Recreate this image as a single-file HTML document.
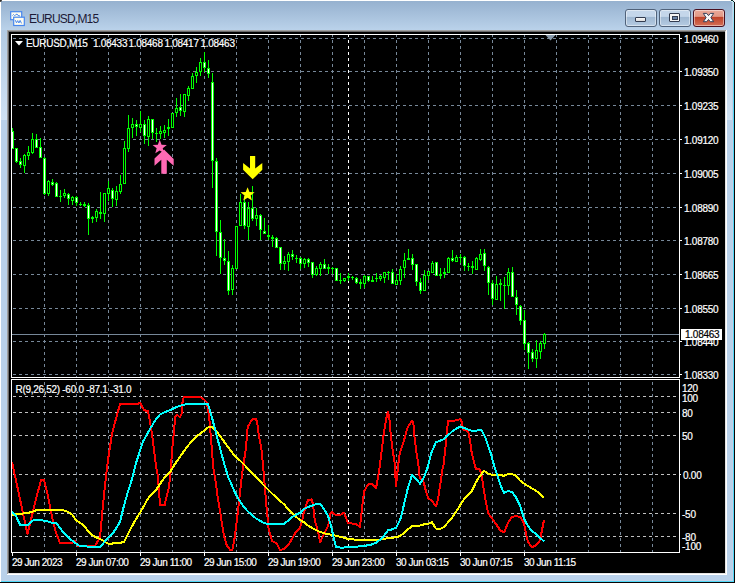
<!DOCTYPE html>
<html><head><meta charset="utf-8"><style>
html,body{margin:0;padding:0;width:737px;height:583px;overflow:hidden;background:#fff;position:relative;font-family:"Liberation Sans", sans-serif;}
.abs{position:absolute}
.ax{position:absolute;color:#fff;font-size:10px;line-height:14px;letter-spacing:-0.45px;white-space:nowrap;-webkit-text-stroke:0.2px currentColor}
#frame{position:absolute;left:1px;top:1px;width:733px;height:581px;background:#b9d1ea}
#tbar{position:absolute;left:1px;top:1px;width:732px;height:29px;background:linear-gradient(#96b1cf,#bad2ea)}
.btn{position:absolute;top:9px;height:16px;border:1px solid #50627a;border-radius:3px;box-sizing:content-box;box-shadow:inset 0 0 0 1px rgba(255,255,255,0.45)}
</style></head><body>
<div id="frame"></div>
<div id="tbar"></div>
<div class="abs" style="left:1px;top:30px;width:6px;height:90px;background:linear-gradient(#b2cae3,#d0e2f3)"></div>
<div class="abs" style="left:727px;top:30px;width:6px;height:90px;background:linear-gradient(#b2cae3,#d0e2f3)"></div>
<div class="abs" style="left:733px;top:2px;width:1px;height:579px;background:linear-gradient(#b0e8f6,#50d8f8 60px,#50d8f8)"></div>
<div class="abs" style="left:732px;top:1px;width:1px;height:580px;background:#c4d0e6"></div>
<div class="abs" style="left:734px;top:2px;width:1px;height:581px;background:#0a0505"></div>
<div class="abs" style="left:1px;top:581px;width:733px;height:1px;background:#50d8f8"></div>
<div class="abs" style="left:1px;top:580px;width:732px;height:1px;background:#c4d0e6"></div>
<div class="abs" style="left:0px;top:582px;width:735px;height:1px;background:#0a0505"></div>
<div class="abs" style="left:0;top:0;width:2px;height:2px;background:#303030;border-bottom-right-radius:2px"></div>
<div class="abs" style="left:731px;top:0;width:2px;height:1px;background:#0a2a2a"></div><div class="abs" style="left:733px;top:0;width:2px;height:2px;background:#f0f0f0"></div><div class="abs" style="left:733px;top:1px;width:1px;height:1px;background:#0a3030"></div><div class="abs" style="left:731px;top:1px;width:2px;height:1px;background:#c8f0f8"></div>
<!-- icon -->
<svg class="abs" style="left:9px;top:10px" width="17" height="17" viewBox="0 0 17 17">
<rect x="1.7" y="1.7" width="11" height="8" fill="#fffdf0" stroke="#4787ee" stroke-width="1.2"/>
<path d="M3.5 5.5l1-1 1 1 1-0.5 1.5-1 1 1.5 2 0.5" stroke="#4787ee" stroke-width="1" fill="none"/>
<rect x="4.7" y="7.2" width="10.6" height="8.3" fill="#fffdf0" stroke="#4787ee" stroke-width="1.2"/>
<path d="M6.3 10.2l1.2 2.6 1.2-2.2 1.2 2.4 1.2-2.6 1.4 3" stroke="#4787ee" stroke-width="1" fill="none"/>
</svg>
<div class="abs" style="left:29px;top:11px;font-size:12px;line-height:16px;letter-spacing:-0.8px;color:#1c1a36">EURUSD,M15</div>
<!-- buttons -->
<div class="btn" style="left:625px;width:30px;background:linear-gradient(#c4d6ea 0,#c4d6ea 40%,#9fb8d2 45%,#b5cbe2 100%)"></div>
<div class="btn" style="left:659px;width:30px;background:linear-gradient(#c4d6ea 0,#c4d6ea 40%,#9fb8d2 45%,#b5cbe2 100%)"></div>
<div class="btn" style="left:693px;width:30px;border-color:#4a1020;background:linear-gradient(#eaa898 0,#e29a88 40%,#bf4228 45%,#d47058 100%)"></div>
<div class="abs" style="left:635px;top:17px;width:9px;height:3px;background:linear-gradient(#fafafa,#dcdcdc);border:1px solid #333c50;border-radius:1px"></div>
<div class="abs" style="left:669px;top:13px;width:9px;height:7px;background:#f4f4f4;border:1px solid #333c50;border-radius:1px"></div>
<div class="abs" style="left:672px;top:16px;width:4px;height:2px;background:#6a84a8;border:1px solid #333c50"></div>
<svg class="abs" style="left:700px;top:11px" width="17" height="13" viewBox="700 11 17 13">
<polygon points="703.3,13.4 706.7,13.4 708.5,15.6 710.3,13.4 713.7,13.4 710.9,17.6 713.7,21.7 710.3,21.7 708.5,19.5 706.7,21.7 703.3,21.7 706.1,17.6" fill="#f8f8f8" stroke="#34405a" stroke-width="1" stroke-linejoin="round"/>
</svg>
<!-- client sunken edge -->
<div class="abs" style="left:7px;top:30px;width:720px;height:1px;background:#a0a0a0"></div>
<div class="abs" style="left:7px;top:30px;width:1px;height:545px;background:#a0a0a0"></div>
<div class="abs" style="left:8px;top:31px;width:718px;height:1px;background:#696969"></div>
<div class="abs" style="left:8px;top:31px;width:1px;height:543px;background:#696969"></div>
<div class="abs" style="left:8px;top:573px;width:718px;height:1px;background:#e3e3e3"></div>
<div class="abs" style="left:725px;top:31px;width:1px;height:543px;background:#e3e3e3"></div>
<div class="abs" style="left:7px;top:574px;width:720px;height:1px;background:#fff"></div>
<div class="abs" style="left:726px;top:30px;width:1px;height:545px;background:#fff"></div>
<div class="abs" style="left:9px;top:32px;width:716px;height:541px;background:#000"></div>
<svg class="abs" style="left:0;top:0" width="737" height="583" viewBox="0 0 737 583">
<g shape-rendering="crispEdges">
<path d="M13 38h3M19 38h3M25 38h3M31 38h3M37 38h3M43 38h3M49 38h3M55 38h3M61 38h3M67 38h3M73 38h3M79 38h3M85 38h3M91 38h3M97 38h3M103 38h3M109 38h3M115 38h3M121 38h3M127 38h3M133 38h3M139 38h3M145 38h3M151 38h3M157 38h3M163 38h3M169 38h3M175 38h3M181 38h3M187 38h3M193 38h3M199 38h3M205 38h3M211 38h3M217 38h3M223 38h3M229 38h3M235 38h3M241 38h3M247 38h3M253 38h3M259 38h3M265 38h3M271 38h3M277 38h3M283 38h3M289 38h3M295 38h3M301 38h3M307 38h3M313 38h3M319 38h3M325 38h3M331 38h3M337 38h3M343 38h3M349 38h3M355 38h3M361 38h3M367 38h3M373 38h3M379 38h3M385 38h3M391 38h3M397 38h3M403 38h3M409 38h3M415 38h3M421 38h3M427 38h3M433 38h3M439 38h3M445 38h3M451 38h3M457 38h3M463 38h3M469 38h3M475 38h3M481 38h3M487 38h3M493 38h3M499 38h3M505 38h3M511 38h3M517 38h3M523 38h3M529 38h3M535 38h3M541 38h3M547 38h3M553 38h3M559 38h3M565 38h3M571 38h3M577 38h3M583 38h3M589 38h3M595 38h3M601 38h3M607 38h3M613 38h3M619 38h3M625 38h3M631 38h3M637 38h3M643 38h3M649 38h3M655 38h3M661 38h3M667 38h3M673 38h3" stroke="#778899" stroke-width="1" transform="translate(0,0.5)"/>
<path d="M13 71h3M19 71h3M25 71h3M31 71h3M37 71h3M43 71h3M49 71h3M55 71h3M61 71h3M67 71h3M73 71h3M79 71h3M85 71h3M91 71h3M97 71h3M103 71h3M109 71h3M115 71h3M121 71h3M127 71h3M133 71h3M139 71h3M145 71h3M151 71h3M157 71h3M163 71h3M169 71h3M175 71h3M181 71h3M187 71h3M193 71h3M199 71h3M205 71h3M211 71h3M217 71h3M223 71h3M229 71h3M235 71h3M241 71h3M247 71h3M253 71h3M259 71h3M265 71h3M271 71h3M277 71h3M283 71h3M289 71h3M295 71h3M301 71h3M307 71h3M313 71h3M319 71h3M325 71h3M331 71h3M337 71h3M343 71h3M349 71h3M355 71h3M361 71h3M367 71h3M373 71h3M379 71h3M385 71h3M391 71h3M397 71h3M403 71h3M409 71h3M415 71h3M421 71h3M427 71h3M433 71h3M439 71h3M445 71h3M451 71h3M457 71h3M463 71h3M469 71h3M475 71h3M481 71h3M487 71h3M493 71h3M499 71h3M505 71h3M511 71h3M517 71h3M523 71h3M529 71h3M535 71h3M541 71h3M547 71h3M553 71h3M559 71h3M565 71h3M571 71h3M577 71h3M583 71h3M589 71h3M595 71h3M601 71h3M607 71h3M613 71h3M619 71h3M625 71h3M631 71h3M637 71h3M643 71h3M649 71h3M655 71h3M661 71h3M667 71h3M673 71h3" stroke="#778899" stroke-width="1" transform="translate(0,0.5)"/>
<path d="M13 105h3M19 105h3M25 105h3M31 105h3M37 105h3M43 105h3M49 105h3M55 105h3M61 105h3M67 105h3M73 105h3M79 105h3M85 105h3M91 105h3M97 105h3M103 105h3M109 105h3M115 105h3M121 105h3M127 105h3M133 105h3M139 105h3M145 105h3M151 105h3M157 105h3M163 105h3M169 105h3M175 105h3M181 105h3M187 105h3M193 105h3M199 105h3M205 105h3M211 105h3M217 105h3M223 105h3M229 105h3M235 105h3M241 105h3M247 105h3M253 105h3M259 105h3M265 105h3M271 105h3M277 105h3M283 105h3M289 105h3M295 105h3M301 105h3M307 105h3M313 105h3M319 105h3M325 105h3M331 105h3M337 105h3M343 105h3M349 105h3M355 105h3M361 105h3M367 105h3M373 105h3M379 105h3M385 105h3M391 105h3M397 105h3M403 105h3M409 105h3M415 105h3M421 105h3M427 105h3M433 105h3M439 105h3M445 105h3M451 105h3M457 105h3M463 105h3M469 105h3M475 105h3M481 105h3M487 105h3M493 105h3M499 105h3M505 105h3M511 105h3M517 105h3M523 105h3M529 105h3M535 105h3M541 105h3M547 105h3M553 105h3M559 105h3M565 105h3M571 105h3M577 105h3M583 105h3M589 105h3M595 105h3M601 105h3M607 105h3M613 105h3M619 105h3M625 105h3M631 105h3M637 105h3M643 105h3M649 105h3M655 105h3M661 105h3M667 105h3M673 105h3" stroke="#778899" stroke-width="1" transform="translate(0,0.5)"/>
<path d="M13 139h3M19 139h3M25 139h3M31 139h3M37 139h3M43 139h3M49 139h3M55 139h3M61 139h3M67 139h3M73 139h3M79 139h3M85 139h3M91 139h3M97 139h3M103 139h3M109 139h3M115 139h3M121 139h3M127 139h3M133 139h3M139 139h3M145 139h3M151 139h3M157 139h3M163 139h3M169 139h3M175 139h3M181 139h3M187 139h3M193 139h3M199 139h3M205 139h3M211 139h3M217 139h3M223 139h3M229 139h3M235 139h3M241 139h3M247 139h3M253 139h3M259 139h3M265 139h3M271 139h3M277 139h3M283 139h3M289 139h3M295 139h3M301 139h3M307 139h3M313 139h3M319 139h3M325 139h3M331 139h3M337 139h3M343 139h3M349 139h3M355 139h3M361 139h3M367 139h3M373 139h3M379 139h3M385 139h3M391 139h3M397 139h3M403 139h3M409 139h3M415 139h3M421 139h3M427 139h3M433 139h3M439 139h3M445 139h3M451 139h3M457 139h3M463 139h3M469 139h3M475 139h3M481 139h3M487 139h3M493 139h3M499 139h3M505 139h3M511 139h3M517 139h3M523 139h3M529 139h3M535 139h3M541 139h3M547 139h3M553 139h3M559 139h3M565 139h3M571 139h3M577 139h3M583 139h3M589 139h3M595 139h3M601 139h3M607 139h3M613 139h3M619 139h3M625 139h3M631 139h3M637 139h3M643 139h3M649 139h3M655 139h3M661 139h3M667 139h3M673 139h3" stroke="#778899" stroke-width="1" transform="translate(0,0.5)"/>
<path d="M13 173h3M19 173h3M25 173h3M31 173h3M37 173h3M43 173h3M49 173h3M55 173h3M61 173h3M67 173h3M73 173h3M79 173h3M85 173h3M91 173h3M97 173h3M103 173h3M109 173h3M115 173h3M121 173h3M127 173h3M133 173h3M139 173h3M145 173h3M151 173h3M157 173h3M163 173h3M169 173h3M175 173h3M181 173h3M187 173h3M193 173h3M199 173h3M205 173h3M211 173h3M217 173h3M223 173h3M229 173h3M235 173h3M241 173h3M247 173h3M253 173h3M259 173h3M265 173h3M271 173h3M277 173h3M283 173h3M289 173h3M295 173h3M301 173h3M307 173h3M313 173h3M319 173h3M325 173h3M331 173h3M337 173h3M343 173h3M349 173h3M355 173h3M361 173h3M367 173h3M373 173h3M379 173h3M385 173h3M391 173h3M397 173h3M403 173h3M409 173h3M415 173h3M421 173h3M427 173h3M433 173h3M439 173h3M445 173h3M451 173h3M457 173h3M463 173h3M469 173h3M475 173h3M481 173h3M487 173h3M493 173h3M499 173h3M505 173h3M511 173h3M517 173h3M523 173h3M529 173h3M535 173h3M541 173h3M547 173h3M553 173h3M559 173h3M565 173h3M571 173h3M577 173h3M583 173h3M589 173h3M595 173h3M601 173h3M607 173h3M613 173h3M619 173h3M625 173h3M631 173h3M637 173h3M643 173h3M649 173h3M655 173h3M661 173h3M667 173h3M673 173h3" stroke="#778899" stroke-width="1" transform="translate(0,0.5)"/>
<path d="M13 207h3M19 207h3M25 207h3M31 207h3M37 207h3M43 207h3M49 207h3M55 207h3M61 207h3M67 207h3M73 207h3M79 207h3M85 207h3M91 207h3M97 207h3M103 207h3M109 207h3M115 207h3M121 207h3M127 207h3M133 207h3M139 207h3M145 207h3M151 207h3M157 207h3M163 207h3M169 207h3M175 207h3M181 207h3M187 207h3M193 207h3M199 207h3M205 207h3M211 207h3M217 207h3M223 207h3M229 207h3M235 207h3M241 207h3M247 207h3M253 207h3M259 207h3M265 207h3M271 207h3M277 207h3M283 207h3M289 207h3M295 207h3M301 207h3M307 207h3M313 207h3M319 207h3M325 207h3M331 207h3M337 207h3M343 207h3M349 207h3M355 207h3M361 207h3M367 207h3M373 207h3M379 207h3M385 207h3M391 207h3M397 207h3M403 207h3M409 207h3M415 207h3M421 207h3M427 207h3M433 207h3M439 207h3M445 207h3M451 207h3M457 207h3M463 207h3M469 207h3M475 207h3M481 207h3M487 207h3M493 207h3M499 207h3M505 207h3M511 207h3M517 207h3M523 207h3M529 207h3M535 207h3M541 207h3M547 207h3M553 207h3M559 207h3M565 207h3M571 207h3M577 207h3M583 207h3M589 207h3M595 207h3M601 207h3M607 207h3M613 207h3M619 207h3M625 207h3M631 207h3M637 207h3M643 207h3M649 207h3M655 207h3M661 207h3M667 207h3M673 207h3" stroke="#778899" stroke-width="1" transform="translate(0,0.5)"/>
<path d="M13 240h3M19 240h3M25 240h3M31 240h3M37 240h3M43 240h3M49 240h3M55 240h3M61 240h3M67 240h3M73 240h3M79 240h3M85 240h3M91 240h3M97 240h3M103 240h3M109 240h3M115 240h3M121 240h3M127 240h3M133 240h3M139 240h3M145 240h3M151 240h3M157 240h3M163 240h3M169 240h3M175 240h3M181 240h3M187 240h3M193 240h3M199 240h3M205 240h3M211 240h3M217 240h3M223 240h3M229 240h3M235 240h3M241 240h3M247 240h3M253 240h3M259 240h3M265 240h3M271 240h3M277 240h3M283 240h3M289 240h3M295 240h3M301 240h3M307 240h3M313 240h3M319 240h3M325 240h3M331 240h3M337 240h3M343 240h3M349 240h3M355 240h3M361 240h3M367 240h3M373 240h3M379 240h3M385 240h3M391 240h3M397 240h3M403 240h3M409 240h3M415 240h3M421 240h3M427 240h3M433 240h3M439 240h3M445 240h3M451 240h3M457 240h3M463 240h3M469 240h3M475 240h3M481 240h3M487 240h3M493 240h3M499 240h3M505 240h3M511 240h3M517 240h3M523 240h3M529 240h3M535 240h3M541 240h3M547 240h3M553 240h3M559 240h3M565 240h3M571 240h3M577 240h3M583 240h3M589 240h3M595 240h3M601 240h3M607 240h3M613 240h3M619 240h3M625 240h3M631 240h3M637 240h3M643 240h3M649 240h3M655 240h3M661 240h3M667 240h3M673 240h3" stroke="#778899" stroke-width="1" transform="translate(0,0.5)"/>
<path d="M13 274h3M19 274h3M25 274h3M31 274h3M37 274h3M43 274h3M49 274h3M55 274h3M61 274h3M67 274h3M73 274h3M79 274h3M85 274h3M91 274h3M97 274h3M103 274h3M109 274h3M115 274h3M121 274h3M127 274h3M133 274h3M139 274h3M145 274h3M151 274h3M157 274h3M163 274h3M169 274h3M175 274h3M181 274h3M187 274h3M193 274h3M199 274h3M205 274h3M211 274h3M217 274h3M223 274h3M229 274h3M235 274h3M241 274h3M247 274h3M253 274h3M259 274h3M265 274h3M271 274h3M277 274h3M283 274h3M289 274h3M295 274h3M301 274h3M307 274h3M313 274h3M319 274h3M325 274h3M331 274h3M337 274h3M343 274h3M349 274h3M355 274h3M361 274h3M367 274h3M373 274h3M379 274h3M385 274h3M391 274h3M397 274h3M403 274h3M409 274h3M415 274h3M421 274h3M427 274h3M433 274h3M439 274h3M445 274h3M451 274h3M457 274h3M463 274h3M469 274h3M475 274h3M481 274h3M487 274h3M493 274h3M499 274h3M505 274h3M511 274h3M517 274h3M523 274h3M529 274h3M535 274h3M541 274h3M547 274h3M553 274h3M559 274h3M565 274h3M571 274h3M577 274h3M583 274h3M589 274h3M595 274h3M601 274h3M607 274h3M613 274h3M619 274h3M625 274h3M631 274h3M637 274h3M643 274h3M649 274h3M655 274h3M661 274h3M667 274h3M673 274h3" stroke="#778899" stroke-width="1" transform="translate(0,0.5)"/>
<path d="M13 308h3M19 308h3M25 308h3M31 308h3M37 308h3M43 308h3M49 308h3M55 308h3M61 308h3M67 308h3M73 308h3M79 308h3M85 308h3M91 308h3M97 308h3M103 308h3M109 308h3M115 308h3M121 308h3M127 308h3M133 308h3M139 308h3M145 308h3M151 308h3M157 308h3M163 308h3M169 308h3M175 308h3M181 308h3M187 308h3M193 308h3M199 308h3M205 308h3M211 308h3M217 308h3M223 308h3M229 308h3M235 308h3M241 308h3M247 308h3M253 308h3M259 308h3M265 308h3M271 308h3M277 308h3M283 308h3M289 308h3M295 308h3M301 308h3M307 308h3M313 308h3M319 308h3M325 308h3M331 308h3M337 308h3M343 308h3M349 308h3M355 308h3M361 308h3M367 308h3M373 308h3M379 308h3M385 308h3M391 308h3M397 308h3M403 308h3M409 308h3M415 308h3M421 308h3M427 308h3M433 308h3M439 308h3M445 308h3M451 308h3M457 308h3M463 308h3M469 308h3M475 308h3M481 308h3M487 308h3M493 308h3M499 308h3M505 308h3M511 308h3M517 308h3M523 308h3M529 308h3M535 308h3M541 308h3M547 308h3M553 308h3M559 308h3M565 308h3M571 308h3M577 308h3M583 308h3M589 308h3M595 308h3M601 308h3M607 308h3M613 308h3M619 308h3M625 308h3M631 308h3M637 308h3M643 308h3M649 308h3M655 308h3M661 308h3M667 308h3M673 308h3" stroke="#778899" stroke-width="1" transform="translate(0,0.5)"/>
<path d="M13 341h3M19 341h3M25 341h3M31 341h3M37 341h3M43 341h3M49 341h3M55 341h3M61 341h3M67 341h3M73 341h3M79 341h3M85 341h3M91 341h3M97 341h3M103 341h3M109 341h3M115 341h3M121 341h3M127 341h3M133 341h3M139 341h3M145 341h3M151 341h3M157 341h3M163 341h3M169 341h3M175 341h3M181 341h3M187 341h3M193 341h3M199 341h3M205 341h3M211 341h3M217 341h3M223 341h3M229 341h3M235 341h3M241 341h3M247 341h3M253 341h3M259 341h3M265 341h3M271 341h3M277 341h3M283 341h3M289 341h3M295 341h3M301 341h3M307 341h3M313 341h3M319 341h3M325 341h3M331 341h3M337 341h3M343 341h3M349 341h3M355 341h3M361 341h3M367 341h3M373 341h3M379 341h3M385 341h3M391 341h3M397 341h3M403 341h3M409 341h3M415 341h3M421 341h3M427 341h3M433 341h3M439 341h3M445 341h3M451 341h3M457 341h3M463 341h3M469 341h3M475 341h3M481 341h3M487 341h3M493 341h3M499 341h3M505 341h3M511 341h3M517 341h3M523 341h3M529 341h3M535 341h3M541 341h3M547 341h3M553 341h3M559 341h3M565 341h3M571 341h3M577 341h3M583 341h3M589 341h3M595 341h3M601 341h3M607 341h3M613 341h3M619 341h3M625 341h3M631 341h3M637 341h3M643 341h3M649 341h3M655 341h3M661 341h3M667 341h3M673 341h3" stroke="#778899" stroke-width="1" transform="translate(0,0.5)"/>
<path d="M13 374h3M19 374h3M25 374h3M31 374h3M37 374h3M43 374h3M49 374h3M55 374h3M61 374h3M67 374h3M73 374h3M79 374h3M85 374h3M91 374h3M97 374h3M103 374h3M109 374h3M115 374h3M121 374h3M127 374h3M133 374h3M139 374h3M145 374h3M151 374h3M157 374h3M163 374h3M169 374h3M175 374h3M181 374h3M187 374h3M193 374h3M199 374h3M205 374h3M211 374h3M217 374h3M223 374h3M229 374h3M235 374h3M241 374h3M247 374h3M253 374h3M259 374h3M265 374h3M271 374h3M277 374h3M283 374h3M289 374h3M295 374h3M301 374h3M307 374h3M313 374h3M319 374h3M325 374h3M331 374h3M337 374h3M343 374h3M349 374h3M355 374h3M361 374h3M367 374h3M373 374h3M379 374h3M385 374h3M391 374h3M397 374h3M403 374h3M409 374h3M415 374h3M421 374h3M427 374h3M433 374h3M439 374h3M445 374h3M451 374h3M457 374h3M463 374h3M469 374h3M475 374h3M481 374h3M487 374h3M493 374h3M499 374h3M505 374h3M511 374h3M517 374h3M523 374h3M529 374h3M535 374h3M541 374h3M547 374h3M553 374h3M559 374h3M565 374h3M571 374h3M577 374h3M583 374h3M589 374h3M595 374h3M601 374h3M607 374h3M613 374h3M619 374h3M625 374h3M631 374h3M637 374h3M643 374h3M649 374h3M655 374h3M661 374h3M667 374h3M673 374h3" stroke="#778899" stroke-width="1" transform="translate(0,0.5)"/>
<path d="M44 35v2M44 40v3M44 46v3M44 52v3M44 58v3M44 64v3M44 70v3M44 76v3M44 82v3M44 88v3M44 94v3M44 100v3M44 106v3M44 112v3M44 118v3M44 124v3M44 130v3M44 136v3M44 142v3M44 148v3M44 154v3M44 160v3M44 166v3M44 172v3M44 178v3M44 184v3M44 190v3M44 196v3M44 202v3M44 208v3M44 214v3M44 220v3M44 226v3M44 232v3M44 238v3M44 244v3M44 250v3M44 256v3M44 262v3M44 268v3M44 274v3M44 280v3M44 286v3M44 292v3M44 298v3M44 304v3M44 310v3M44 316v3M44 322v3M44 328v3M44 334v3M44 340v3M44 346v3M44 352v3M44 358v3M44 364v3M44 370v3M44 376v1" stroke="#778899" stroke-width="1" transform="translate(0.5,0)"/>
<path d="M76 35v2M76 40v3M76 46v3M76 52v3M76 58v3M76 64v3M76 70v3M76 76v3M76 82v3M76 88v3M76 94v3M76 100v3M76 106v3M76 112v3M76 118v3M76 124v3M76 130v3M76 136v3M76 142v3M76 148v3M76 154v3M76 160v3M76 166v3M76 172v3M76 178v3M76 184v3M76 190v3M76 196v3M76 202v3M76 208v3M76 214v3M76 220v3M76 226v3M76 232v3M76 238v3M76 244v3M76 250v3M76 256v3M76 262v3M76 268v3M76 274v3M76 280v3M76 286v3M76 292v3M76 298v3M76 304v3M76 310v3M76 316v3M76 322v3M76 328v3M76 334v3M76 340v3M76 346v3M76 352v3M76 358v3M76 364v3M76 370v3M76 376v1" stroke="#778899" stroke-width="1" transform="translate(0.5,0)"/>
<path d="M108 35v2M108 40v3M108 46v3M108 52v3M108 58v3M108 64v3M108 70v3M108 76v3M108 82v3M108 88v3M108 94v3M108 100v3M108 106v3M108 112v3M108 118v3M108 124v3M108 130v3M108 136v3M108 142v3M108 148v3M108 154v3M108 160v3M108 166v3M108 172v3M108 178v3M108 184v3M108 190v3M108 196v3M108 202v3M108 208v3M108 214v3M108 220v3M108 226v3M108 232v3M108 238v3M108 244v3M108 250v3M108 256v3M108 262v3M108 268v3M108 274v3M108 280v3M108 286v3M108 292v3M108 298v3M108 304v3M108 310v3M108 316v3M108 322v3M108 328v3M108 334v3M108 340v3M108 346v3M108 352v3M108 358v3M108 364v3M108 370v3M108 376v1" stroke="#778899" stroke-width="1" transform="translate(0.5,0)"/>
<path d="M140 35v2M140 40v3M140 46v3M140 52v3M140 58v3M140 64v3M140 70v3M140 76v3M140 82v3M140 88v3M140 94v3M140 100v3M140 106v3M140 112v3M140 118v3M140 124v3M140 130v3M140 136v3M140 142v3M140 148v3M140 154v3M140 160v3M140 166v3M140 172v3M140 178v3M140 184v3M140 190v3M140 196v3M140 202v3M140 208v3M140 214v3M140 220v3M140 226v3M140 232v3M140 238v3M140 244v3M140 250v3M140 256v3M140 262v3M140 268v3M140 274v3M140 280v3M140 286v3M140 292v3M140 298v3M140 304v3M140 310v3M140 316v3M140 322v3M140 328v3M140 334v3M140 340v3M140 346v3M140 352v3M140 358v3M140 364v3M140 370v3M140 376v1" stroke="#778899" stroke-width="1" transform="translate(0.5,0)"/>
<path d="M172 35v2M172 40v3M172 46v3M172 52v3M172 58v3M172 64v3M172 70v3M172 76v3M172 82v3M172 88v3M172 94v3M172 100v3M172 106v3M172 112v3M172 118v3M172 124v3M172 130v3M172 136v3M172 142v3M172 148v3M172 154v3M172 160v3M172 166v3M172 172v3M172 178v3M172 184v3M172 190v3M172 196v3M172 202v3M172 208v3M172 214v3M172 220v3M172 226v3M172 232v3M172 238v3M172 244v3M172 250v3M172 256v3M172 262v3M172 268v3M172 274v3M172 280v3M172 286v3M172 292v3M172 298v3M172 304v3M172 310v3M172 316v3M172 322v3M172 328v3M172 334v3M172 340v3M172 346v3M172 352v3M172 358v3M172 364v3M172 370v3M172 376v1" stroke="#778899" stroke-width="1" transform="translate(0.5,0)"/>
<path d="M204 35v2M204 40v3M204 46v3M204 52v3M204 58v3M204 64v3M204 70v3M204 76v3M204 82v3M204 88v3M204 94v3M204 100v3M204 106v3M204 112v3M204 118v3M204 124v3M204 130v3M204 136v3M204 142v3M204 148v3M204 154v3M204 160v3M204 166v3M204 172v3M204 178v3M204 184v3M204 190v3M204 196v3M204 202v3M204 208v3M204 214v3M204 220v3M204 226v3M204 232v3M204 238v3M204 244v3M204 250v3M204 256v3M204 262v3M204 268v3M204 274v3M204 280v3M204 286v3M204 292v3M204 298v3M204 304v3M204 310v3M204 316v3M204 322v3M204 328v3M204 334v3M204 340v3M204 346v3M204 352v3M204 358v3M204 364v3M204 370v3M204 376v1" stroke="#778899" stroke-width="1" transform="translate(0.5,0)"/>
<path d="M236 35v2M236 40v3M236 46v3M236 52v3M236 58v3M236 64v3M236 70v3M236 76v3M236 82v3M236 88v3M236 94v3M236 100v3M236 106v3M236 112v3M236 118v3M236 124v3M236 130v3M236 136v3M236 142v3M236 148v3M236 154v3M236 160v3M236 166v3M236 172v3M236 178v3M236 184v3M236 190v3M236 196v3M236 202v3M236 208v3M236 214v3M236 220v3M236 226v3M236 232v3M236 238v3M236 244v3M236 250v3M236 256v3M236 262v3M236 268v3M236 274v3M236 280v3M236 286v3M236 292v3M236 298v3M236 304v3M236 310v3M236 316v3M236 322v3M236 328v3M236 334v3M236 340v3M236 346v3M236 352v3M236 358v3M236 364v3M236 370v3M236 376v1" stroke="#778899" stroke-width="1" transform="translate(0.5,0)"/>
<path d="M268 35v2M268 40v3M268 46v3M268 52v3M268 58v3M268 64v3M268 70v3M268 76v3M268 82v3M268 88v3M268 94v3M268 100v3M268 106v3M268 112v3M268 118v3M268 124v3M268 130v3M268 136v3M268 142v3M268 148v3M268 154v3M268 160v3M268 166v3M268 172v3M268 178v3M268 184v3M268 190v3M268 196v3M268 202v3M268 208v3M268 214v3M268 220v3M268 226v3M268 232v3M268 238v3M268 244v3M268 250v3M268 256v3M268 262v3M268 268v3M268 274v3M268 280v3M268 286v3M268 292v3M268 298v3M268 304v3M268 310v3M268 316v3M268 322v3M268 328v3M268 334v3M268 340v3M268 346v3M268 352v3M268 358v3M268 364v3M268 370v3M268 376v1" stroke="#778899" stroke-width="1" transform="translate(0.5,0)"/>
<path d="M300 35v2M300 40v3M300 46v3M300 52v3M300 58v3M300 64v3M300 70v3M300 76v3M300 82v3M300 88v3M300 94v3M300 100v3M300 106v3M300 112v3M300 118v3M300 124v3M300 130v3M300 136v3M300 142v3M300 148v3M300 154v3M300 160v3M300 166v3M300 172v3M300 178v3M300 184v3M300 190v3M300 196v3M300 202v3M300 208v3M300 214v3M300 220v3M300 226v3M300 232v3M300 238v3M300 244v3M300 250v3M300 256v3M300 262v3M300 268v3M300 274v3M300 280v3M300 286v3M300 292v3M300 298v3M300 304v3M300 310v3M300 316v3M300 322v3M300 328v3M300 334v3M300 340v3M300 346v3M300 352v3M300 358v3M300 364v3M300 370v3M300 376v1" stroke="#778899" stroke-width="1" transform="translate(0.5,0)"/>
<path d="M332 35v2M332 40v3M332 46v3M332 52v3M332 58v3M332 64v3M332 70v3M332 76v3M332 82v3M332 88v3M332 94v3M332 100v3M332 106v3M332 112v3M332 118v3M332 124v3M332 130v3M332 136v3M332 142v3M332 148v3M332 154v3M332 160v3M332 166v3M332 172v3M332 178v3M332 184v3M332 190v3M332 196v3M332 202v3M332 208v3M332 214v3M332 220v3M332 226v3M332 232v3M332 238v3M332 244v3M332 250v3M332 256v3M332 262v3M332 268v3M332 274v3M332 280v3M332 286v3M332 292v3M332 298v3M332 304v3M332 310v3M332 316v3M332 322v3M332 328v3M332 334v3M332 340v3M332 346v3M332 352v3M332 358v3M332 364v3M332 370v3M332 376v1" stroke="#778899" stroke-width="1" transform="translate(0.5,0)"/>
<path d="M364 35v2M364 40v3M364 46v3M364 52v3M364 58v3M364 64v3M364 70v3M364 76v3M364 82v3M364 88v3M364 94v3M364 100v3M364 106v3M364 112v3M364 118v3M364 124v3M364 130v3M364 136v3M364 142v3M364 148v3M364 154v3M364 160v3M364 166v3M364 172v3M364 178v3M364 184v3M364 190v3M364 196v3M364 202v3M364 208v3M364 214v3M364 220v3M364 226v3M364 232v3M364 238v3M364 244v3M364 250v3M364 256v3M364 262v3M364 268v3M364 274v3M364 280v3M364 286v3M364 292v3M364 298v3M364 304v3M364 310v3M364 316v3M364 322v3M364 328v3M364 334v3M364 340v3M364 346v3M364 352v3M364 358v3M364 364v3M364 370v3M364 376v1" stroke="#778899" stroke-width="1" transform="translate(0.5,0)"/>
<path d="M396 35v2M396 40v3M396 46v3M396 52v3M396 58v3M396 64v3M396 70v3M396 76v3M396 82v3M396 88v3M396 94v3M396 100v3M396 106v3M396 112v3M396 118v3M396 124v3M396 130v3M396 136v3M396 142v3M396 148v3M396 154v3M396 160v3M396 166v3M396 172v3M396 178v3M396 184v3M396 190v3M396 196v3M396 202v3M396 208v3M396 214v3M396 220v3M396 226v3M396 232v3M396 238v3M396 244v3M396 250v3M396 256v3M396 262v3M396 268v3M396 274v3M396 280v3M396 286v3M396 292v3M396 298v3M396 304v3M396 310v3M396 316v3M396 322v3M396 328v3M396 334v3M396 340v3M396 346v3M396 352v3M396 358v3M396 364v3M396 370v3M396 376v1" stroke="#778899" stroke-width="1" transform="translate(0.5,0)"/>
<path d="M428 35v2M428 40v3M428 46v3M428 52v3M428 58v3M428 64v3M428 70v3M428 76v3M428 82v3M428 88v3M428 94v3M428 100v3M428 106v3M428 112v3M428 118v3M428 124v3M428 130v3M428 136v3M428 142v3M428 148v3M428 154v3M428 160v3M428 166v3M428 172v3M428 178v3M428 184v3M428 190v3M428 196v3M428 202v3M428 208v3M428 214v3M428 220v3M428 226v3M428 232v3M428 238v3M428 244v3M428 250v3M428 256v3M428 262v3M428 268v3M428 274v3M428 280v3M428 286v3M428 292v3M428 298v3M428 304v3M428 310v3M428 316v3M428 322v3M428 328v3M428 334v3M428 340v3M428 346v3M428 352v3M428 358v3M428 364v3M428 370v3M428 376v1" stroke="#778899" stroke-width="1" transform="translate(0.5,0)"/>
<path d="M460 35v2M460 40v3M460 46v3M460 52v3M460 58v3M460 64v3M460 70v3M460 76v3M460 82v3M460 88v3M460 94v3M460 100v3M460 106v3M460 112v3M460 118v3M460 124v3M460 130v3M460 136v3M460 142v3M460 148v3M460 154v3M460 160v3M460 166v3M460 172v3M460 178v3M460 184v3M460 190v3M460 196v3M460 202v3M460 208v3M460 214v3M460 220v3M460 226v3M460 232v3M460 238v3M460 244v3M460 250v3M460 256v3M460 262v3M460 268v3M460 274v3M460 280v3M460 286v3M460 292v3M460 298v3M460 304v3M460 310v3M460 316v3M460 322v3M460 328v3M460 334v3M460 340v3M460 346v3M460 352v3M460 358v3M460 364v3M460 370v3M460 376v1" stroke="#778899" stroke-width="1" transform="translate(0.5,0)"/>
<path d="M492 35v2M492 40v3M492 46v3M492 52v3M492 58v3M492 64v3M492 70v3M492 76v3M492 82v3M492 88v3M492 94v3M492 100v3M492 106v3M492 112v3M492 118v3M492 124v3M492 130v3M492 136v3M492 142v3M492 148v3M492 154v3M492 160v3M492 166v3M492 172v3M492 178v3M492 184v3M492 190v3M492 196v3M492 202v3M492 208v3M492 214v3M492 220v3M492 226v3M492 232v3M492 238v3M492 244v3M492 250v3M492 256v3M492 262v3M492 268v3M492 274v3M492 280v3M492 286v3M492 292v3M492 298v3M492 304v3M492 310v3M492 316v3M492 322v3M492 328v3M492 334v3M492 340v3M492 346v3M492 352v3M492 358v3M492 364v3M492 370v3M492 376v1" stroke="#778899" stroke-width="1" transform="translate(0.5,0)"/>
<path d="M524 35v2M524 40v3M524 46v3M524 52v3M524 58v3M524 64v3M524 70v3M524 76v3M524 82v3M524 88v3M524 94v3M524 100v3M524 106v3M524 112v3M524 118v3M524 124v3M524 130v3M524 136v3M524 142v3M524 148v3M524 154v3M524 160v3M524 166v3M524 172v3M524 178v3M524 184v3M524 190v3M524 196v3M524 202v3M524 208v3M524 214v3M524 220v3M524 226v3M524 232v3M524 238v3M524 244v3M524 250v3M524 256v3M524 262v3M524 268v3M524 274v3M524 280v3M524 286v3M524 292v3M524 298v3M524 304v3M524 310v3M524 316v3M524 322v3M524 328v3M524 334v3M524 340v3M524 346v3M524 352v3M524 358v3M524 364v3M524 370v3M524 376v1" stroke="#778899" stroke-width="1" transform="translate(0.5,0)"/>
<path d="M556 35v2M556 40v3M556 46v3M556 52v3M556 58v3M556 64v3M556 70v3M556 76v3M556 82v3M556 88v3M556 94v3M556 100v3M556 106v3M556 112v3M556 118v3M556 124v3M556 130v3M556 136v3M556 142v3M556 148v3M556 154v3M556 160v3M556 166v3M556 172v3M556 178v3M556 184v3M556 190v3M556 196v3M556 202v3M556 208v3M556 214v3M556 220v3M556 226v3M556 232v3M556 238v3M556 244v3M556 250v3M556 256v3M556 262v3M556 268v3M556 274v3M556 280v3M556 286v3M556 292v3M556 298v3M556 304v3M556 310v3M556 316v3M556 322v3M556 328v3M556 334v3M556 340v3M556 346v3M556 352v3M556 358v3M556 364v3M556 370v3M556 376v1" stroke="#778899" stroke-width="1" transform="translate(0.5,0)"/>
<path d="M588 35v2M588 40v3M588 46v3M588 52v3M588 58v3M588 64v3M588 70v3M588 76v3M588 82v3M588 88v3M588 94v3M588 100v3M588 106v3M588 112v3M588 118v3M588 124v3M588 130v3M588 136v3M588 142v3M588 148v3M588 154v3M588 160v3M588 166v3M588 172v3M588 178v3M588 184v3M588 190v3M588 196v3M588 202v3M588 208v3M588 214v3M588 220v3M588 226v3M588 232v3M588 238v3M588 244v3M588 250v3M588 256v3M588 262v3M588 268v3M588 274v3M588 280v3M588 286v3M588 292v3M588 298v3M588 304v3M588 310v3M588 316v3M588 322v3M588 328v3M588 334v3M588 340v3M588 346v3M588 352v3M588 358v3M588 364v3M588 370v3M588 376v1" stroke="#778899" stroke-width="1" transform="translate(0.5,0)"/>
<path d="M620 35v2M620 40v3M620 46v3M620 52v3M620 58v3M620 64v3M620 70v3M620 76v3M620 82v3M620 88v3M620 94v3M620 100v3M620 106v3M620 112v3M620 118v3M620 124v3M620 130v3M620 136v3M620 142v3M620 148v3M620 154v3M620 160v3M620 166v3M620 172v3M620 178v3M620 184v3M620 190v3M620 196v3M620 202v3M620 208v3M620 214v3M620 220v3M620 226v3M620 232v3M620 238v3M620 244v3M620 250v3M620 256v3M620 262v3M620 268v3M620 274v3M620 280v3M620 286v3M620 292v3M620 298v3M620 304v3M620 310v3M620 316v3M620 322v3M620 328v3M620 334v3M620 340v3M620 346v3M620 352v3M620 358v3M620 364v3M620 370v3M620 376v1" stroke="#778899" stroke-width="1" transform="translate(0.5,0)"/>
<path d="M652 35v2M652 40v3M652 46v3M652 52v3M652 58v3M652 64v3M652 70v3M652 76v3M652 82v3M652 88v3M652 94v3M652 100v3M652 106v3M652 112v3M652 118v3M652 124v3M652 130v3M652 136v3M652 142v3M652 148v3M652 154v3M652 160v3M652 166v3M652 172v3M652 178v3M652 184v3M652 190v3M652 196v3M652 202v3M652 208v3M652 214v3M652 220v3M652 226v3M652 232v3M652 238v3M652 244v3M652 250v3M652 256v3M652 262v3M652 268v3M652 274v3M652 280v3M652 286v3M652 292v3M652 298v3M652 304v3M652 310v3M652 316v3M652 322v3M652 328v3M652 334v3M652 340v3M652 346v3M652 352v3M652 358v3M652 364v3M652 370v3M652 376v1" stroke="#778899" stroke-width="1" transform="translate(0.5,0)"/>
<path d="M348 35v2M348 40v3M348 46v3M348 52v3M348 58v3M348 64v3M348 70v3M348 76v3M348 82v3M348 88v3M348 94v3M348 100v3M348 106v3M348 112v3M348 118v3M348 124v3M348 130v3M348 136v3M348 142v3M348 148v3M348 154v3M348 160v3M348 166v3M348 172v3M348 178v3M348 184v3M348 190v3M348 196v3M348 202v3M348 208v3M348 214v3M348 220v3M348 226v3M348 232v3M348 238v3M348 244v3M348 250v3M348 256v3M348 262v3M348 268v3M348 274v3M348 280v3M348 286v3M348 292v3M348 298v3M348 304v3M348 310v3M348 316v3M348 322v3M348 328v3M348 334v3M348 340v3M348 346v3M348 352v3M348 358v3M348 364v3M348 370v3M348 376v1" stroke="#ffffff" stroke-width="1" transform="translate(0.5,0)"/>
<path d="M44 382v3M44 388v3M44 394v3M44 400v3M44 406v3M44 412v3M44 418v3M44 424v3M44 430v3M44 436v3M44 442v3M44 448v3M44 454v3M44 460v3M44 466v3M44 472v3M44 478v3M44 484v3M44 490v3M44 496v3M44 502v3M44 508v3M44 514v3M44 520v3M44 526v3M44 532v3M44 538v3M44 544v3M44 550v2" stroke="#778899" stroke-width="1" transform="translate(0.5,0)"/>
<path d="M76 382v3M76 388v3M76 394v3M76 400v3M76 406v3M76 412v3M76 418v3M76 424v3M76 430v3M76 436v3M76 442v3M76 448v3M76 454v3M76 460v3M76 466v3M76 472v3M76 478v3M76 484v3M76 490v3M76 496v3M76 502v3M76 508v3M76 514v3M76 520v3M76 526v3M76 532v3M76 538v3M76 544v3M76 550v2" stroke="#778899" stroke-width="1" transform="translate(0.5,0)"/>
<path d="M108 382v3M108 388v3M108 394v3M108 400v3M108 406v3M108 412v3M108 418v3M108 424v3M108 430v3M108 436v3M108 442v3M108 448v3M108 454v3M108 460v3M108 466v3M108 472v3M108 478v3M108 484v3M108 490v3M108 496v3M108 502v3M108 508v3M108 514v3M108 520v3M108 526v3M108 532v3M108 538v3M108 544v3M108 550v2" stroke="#778899" stroke-width="1" transform="translate(0.5,0)"/>
<path d="M140 382v3M140 388v3M140 394v3M140 400v3M140 406v3M140 412v3M140 418v3M140 424v3M140 430v3M140 436v3M140 442v3M140 448v3M140 454v3M140 460v3M140 466v3M140 472v3M140 478v3M140 484v3M140 490v3M140 496v3M140 502v3M140 508v3M140 514v3M140 520v3M140 526v3M140 532v3M140 538v3M140 544v3M140 550v2" stroke="#778899" stroke-width="1" transform="translate(0.5,0)"/>
<path d="M172 382v3M172 388v3M172 394v3M172 400v3M172 406v3M172 412v3M172 418v3M172 424v3M172 430v3M172 436v3M172 442v3M172 448v3M172 454v3M172 460v3M172 466v3M172 472v3M172 478v3M172 484v3M172 490v3M172 496v3M172 502v3M172 508v3M172 514v3M172 520v3M172 526v3M172 532v3M172 538v3M172 544v3M172 550v2" stroke="#778899" stroke-width="1" transform="translate(0.5,0)"/>
<path d="M204 382v3M204 388v3M204 394v3M204 400v3M204 406v3M204 412v3M204 418v3M204 424v3M204 430v3M204 436v3M204 442v3M204 448v3M204 454v3M204 460v3M204 466v3M204 472v3M204 478v3M204 484v3M204 490v3M204 496v3M204 502v3M204 508v3M204 514v3M204 520v3M204 526v3M204 532v3M204 538v3M204 544v3M204 550v2" stroke="#778899" stroke-width="1" transform="translate(0.5,0)"/>
<path d="M236 382v3M236 388v3M236 394v3M236 400v3M236 406v3M236 412v3M236 418v3M236 424v3M236 430v3M236 436v3M236 442v3M236 448v3M236 454v3M236 460v3M236 466v3M236 472v3M236 478v3M236 484v3M236 490v3M236 496v3M236 502v3M236 508v3M236 514v3M236 520v3M236 526v3M236 532v3M236 538v3M236 544v3M236 550v2" stroke="#778899" stroke-width="1" transform="translate(0.5,0)"/>
<path d="M268 382v3M268 388v3M268 394v3M268 400v3M268 406v3M268 412v3M268 418v3M268 424v3M268 430v3M268 436v3M268 442v3M268 448v3M268 454v3M268 460v3M268 466v3M268 472v3M268 478v3M268 484v3M268 490v3M268 496v3M268 502v3M268 508v3M268 514v3M268 520v3M268 526v3M268 532v3M268 538v3M268 544v3M268 550v2" stroke="#778899" stroke-width="1" transform="translate(0.5,0)"/>
<path d="M300 382v3M300 388v3M300 394v3M300 400v3M300 406v3M300 412v3M300 418v3M300 424v3M300 430v3M300 436v3M300 442v3M300 448v3M300 454v3M300 460v3M300 466v3M300 472v3M300 478v3M300 484v3M300 490v3M300 496v3M300 502v3M300 508v3M300 514v3M300 520v3M300 526v3M300 532v3M300 538v3M300 544v3M300 550v2" stroke="#778899" stroke-width="1" transform="translate(0.5,0)"/>
<path d="M332 382v3M332 388v3M332 394v3M332 400v3M332 406v3M332 412v3M332 418v3M332 424v3M332 430v3M332 436v3M332 442v3M332 448v3M332 454v3M332 460v3M332 466v3M332 472v3M332 478v3M332 484v3M332 490v3M332 496v3M332 502v3M332 508v3M332 514v3M332 520v3M332 526v3M332 532v3M332 538v3M332 544v3M332 550v2" stroke="#778899" stroke-width="1" transform="translate(0.5,0)"/>
<path d="M364 382v3M364 388v3M364 394v3M364 400v3M364 406v3M364 412v3M364 418v3M364 424v3M364 430v3M364 436v3M364 442v3M364 448v3M364 454v3M364 460v3M364 466v3M364 472v3M364 478v3M364 484v3M364 490v3M364 496v3M364 502v3M364 508v3M364 514v3M364 520v3M364 526v3M364 532v3M364 538v3M364 544v3M364 550v2" stroke="#778899" stroke-width="1" transform="translate(0.5,0)"/>
<path d="M396 382v3M396 388v3M396 394v3M396 400v3M396 406v3M396 412v3M396 418v3M396 424v3M396 430v3M396 436v3M396 442v3M396 448v3M396 454v3M396 460v3M396 466v3M396 472v3M396 478v3M396 484v3M396 490v3M396 496v3M396 502v3M396 508v3M396 514v3M396 520v3M396 526v3M396 532v3M396 538v3M396 544v3M396 550v2" stroke="#778899" stroke-width="1" transform="translate(0.5,0)"/>
<path d="M428 382v3M428 388v3M428 394v3M428 400v3M428 406v3M428 412v3M428 418v3M428 424v3M428 430v3M428 436v3M428 442v3M428 448v3M428 454v3M428 460v3M428 466v3M428 472v3M428 478v3M428 484v3M428 490v3M428 496v3M428 502v3M428 508v3M428 514v3M428 520v3M428 526v3M428 532v3M428 538v3M428 544v3M428 550v2" stroke="#778899" stroke-width="1" transform="translate(0.5,0)"/>
<path d="M460 382v3M460 388v3M460 394v3M460 400v3M460 406v3M460 412v3M460 418v3M460 424v3M460 430v3M460 436v3M460 442v3M460 448v3M460 454v3M460 460v3M460 466v3M460 472v3M460 478v3M460 484v3M460 490v3M460 496v3M460 502v3M460 508v3M460 514v3M460 520v3M460 526v3M460 532v3M460 538v3M460 544v3M460 550v2" stroke="#778899" stroke-width="1" transform="translate(0.5,0)"/>
<path d="M492 382v3M492 388v3M492 394v3M492 400v3M492 406v3M492 412v3M492 418v3M492 424v3M492 430v3M492 436v3M492 442v3M492 448v3M492 454v3M492 460v3M492 466v3M492 472v3M492 478v3M492 484v3M492 490v3M492 496v3M492 502v3M492 508v3M492 514v3M492 520v3M492 526v3M492 532v3M492 538v3M492 544v3M492 550v2" stroke="#778899" stroke-width="1" transform="translate(0.5,0)"/>
<path d="M524 382v3M524 388v3M524 394v3M524 400v3M524 406v3M524 412v3M524 418v3M524 424v3M524 430v3M524 436v3M524 442v3M524 448v3M524 454v3M524 460v3M524 466v3M524 472v3M524 478v3M524 484v3M524 490v3M524 496v3M524 502v3M524 508v3M524 514v3M524 520v3M524 526v3M524 532v3M524 538v3M524 544v3M524 550v2" stroke="#778899" stroke-width="1" transform="translate(0.5,0)"/>
<path d="M556 382v3M556 388v3M556 394v3M556 400v3M556 406v3M556 412v3M556 418v3M556 424v3M556 430v3M556 436v3M556 442v3M556 448v3M556 454v3M556 460v3M556 466v3M556 472v3M556 478v3M556 484v3M556 490v3M556 496v3M556 502v3M556 508v3M556 514v3M556 520v3M556 526v3M556 532v3M556 538v3M556 544v3M556 550v2" stroke="#778899" stroke-width="1" transform="translate(0.5,0)"/>
<path d="M588 382v3M588 388v3M588 394v3M588 400v3M588 406v3M588 412v3M588 418v3M588 424v3M588 430v3M588 436v3M588 442v3M588 448v3M588 454v3M588 460v3M588 466v3M588 472v3M588 478v3M588 484v3M588 490v3M588 496v3M588 502v3M588 508v3M588 514v3M588 520v3M588 526v3M588 532v3M588 538v3M588 544v3M588 550v2" stroke="#778899" stroke-width="1" transform="translate(0.5,0)"/>
<path d="M620 382v3M620 388v3M620 394v3M620 400v3M620 406v3M620 412v3M620 418v3M620 424v3M620 430v3M620 436v3M620 442v3M620 448v3M620 454v3M620 460v3M620 466v3M620 472v3M620 478v3M620 484v3M620 490v3M620 496v3M620 502v3M620 508v3M620 514v3M620 520v3M620 526v3M620 532v3M620 538v3M620 544v3M620 550v2" stroke="#778899" stroke-width="1" transform="translate(0.5,0)"/>
<path d="M652 382v3M652 388v3M652 394v3M652 400v3M652 406v3M652 412v3M652 418v3M652 424v3M652 430v3M652 436v3M652 442v3M652 448v3M652 454v3M652 460v3M652 466v3M652 472v3M652 478v3M652 484v3M652 490v3M652 496v3M652 502v3M652 508v3M652 514v3M652 520v3M652 526v3M652 532v3M652 538v3M652 544v3M652 550v2" stroke="#778899" stroke-width="1" transform="translate(0.5,0)"/>
<path d="M348 382v3M348 388v3M348 394v3M348 400v3M348 406v3M348 412v3M348 418v3M348 424v3M348 430v3M348 436v3M348 442v3M348 448v3M348 454v3M348 460v3M348 466v3M348 472v3M348 478v3M348 484v3M348 490v3M348 496v3M348 502v3M348 508v3M348 514v3M348 520v3M348 526v3M348 532v3M348 538v3M348 544v3M348 550v2" stroke="#ffffff" stroke-width="1" transform="translate(0.5,0)"/>
<path d="M13 396h3M19 396h3M25 396h3M31 396h3M37 396h3M43 396h3M49 396h3M55 396h3M61 396h3M67 396h3M73 396h3M79 396h3M85 396h3M91 396h3M97 396h3M103 396h3M109 396h3M115 396h3M121 396h3M127 396h3M133 396h3M139 396h3M145 396h3M151 396h3M157 396h3M163 396h3M169 396h3M175 396h3M181 396h3M187 396h3M193 396h3M199 396h3M205 396h3M211 396h3M217 396h3M223 396h3M229 396h3M235 396h3M241 396h3M247 396h3M253 396h3M259 396h3M265 396h3M271 396h3M277 396h3M283 396h3M289 396h3M295 396h3M301 396h3M307 396h3M313 396h3M319 396h3M325 396h3M331 396h3M337 396h3M343 396h3M349 396h3M355 396h3M361 396h3M367 396h3M373 396h3M379 396h3M385 396h3M391 396h3M397 396h3M403 396h3M409 396h3M415 396h3M421 396h3M427 396h3M433 396h3M439 396h3M445 396h3M451 396h3M457 396h3M463 396h3M469 396h3M475 396h3M481 396h3M487 396h3M493 396h3M499 396h3M505 396h3M511 396h3M517 396h3M523 396h3M529 396h3M535 396h3M541 396h3M547 396h3M553 396h3M559 396h3M565 396h3M571 396h3M577 396h3M583 396h3M589 396h3M595 396h3M601 396h3M607 396h3M613 396h3M619 396h3M625 396h3M631 396h3M637 396h3M643 396h3M649 396h3M655 396h3M661 396h3M667 396h3M673 396h3" stroke="#c0c0c0" stroke-width="1" transform="translate(0,0.5)"/>
<path d="M13 412h3M19 412h3M25 412h3M31 412h3M37 412h3M43 412h3M49 412h3M55 412h3M61 412h3M67 412h3M73 412h3M79 412h3M85 412h3M91 412h3M97 412h3M103 412h3M109 412h3M115 412h3M121 412h3M127 412h3M133 412h3M139 412h3M145 412h3M151 412h3M157 412h3M163 412h3M169 412h3M175 412h3M181 412h3M187 412h3M193 412h3M199 412h3M205 412h3M211 412h3M217 412h3M223 412h3M229 412h3M235 412h3M241 412h3M247 412h3M253 412h3M259 412h3M265 412h3M271 412h3M277 412h3M283 412h3M289 412h3M295 412h3M301 412h3M307 412h3M313 412h3M319 412h3M325 412h3M331 412h3M337 412h3M343 412h3M349 412h3M355 412h3M361 412h3M367 412h3M373 412h3M379 412h3M385 412h3M391 412h3M397 412h3M403 412h3M409 412h3M415 412h3M421 412h3M427 412h3M433 412h3M439 412h3M445 412h3M451 412h3M457 412h3M463 412h3M469 412h3M475 412h3M481 412h3M487 412h3M493 412h3M499 412h3M505 412h3M511 412h3M517 412h3M523 412h3M529 412h3M535 412h3M541 412h3M547 412h3M553 412h3M559 412h3M565 412h3M571 412h3M577 412h3M583 412h3M589 412h3M595 412h3M601 412h3M607 412h3M613 412h3M619 412h3M625 412h3M631 412h3M637 412h3M643 412h3M649 412h3M655 412h3M661 412h3M667 412h3M673 412h3" stroke="#c0c0c0" stroke-width="1" transform="translate(0,0.5)"/>
<path d="M13 435h3M19 435h3M25 435h3M31 435h3M37 435h3M43 435h3M49 435h3M55 435h3M61 435h3M67 435h3M73 435h3M79 435h3M85 435h3M91 435h3M97 435h3M103 435h3M109 435h3M115 435h3M121 435h3M127 435h3M133 435h3M139 435h3M145 435h3M151 435h3M157 435h3M163 435h3M169 435h3M175 435h3M181 435h3M187 435h3M193 435h3M199 435h3M205 435h3M211 435h3M217 435h3M223 435h3M229 435h3M235 435h3M241 435h3M247 435h3M253 435h3M259 435h3M265 435h3M271 435h3M277 435h3M283 435h3M289 435h3M295 435h3M301 435h3M307 435h3M313 435h3M319 435h3M325 435h3M331 435h3M337 435h3M343 435h3M349 435h3M355 435h3M361 435h3M367 435h3M373 435h3M379 435h3M385 435h3M391 435h3M397 435h3M403 435h3M409 435h3M415 435h3M421 435h3M427 435h3M433 435h3M439 435h3M445 435h3M451 435h3M457 435h3M463 435h3M469 435h3M475 435h3M481 435h3M487 435h3M493 435h3M499 435h3M505 435h3M511 435h3M517 435h3M523 435h3M529 435h3M535 435h3M541 435h3M547 435h3M553 435h3M559 435h3M565 435h3M571 435h3M577 435h3M583 435h3M589 435h3M595 435h3M601 435h3M607 435h3M613 435h3M619 435h3M625 435h3M631 435h3M637 435h3M643 435h3M649 435h3M655 435h3M661 435h3M667 435h3M673 435h3" stroke="#c0c0c0" stroke-width="1" transform="translate(0,0.5)"/>
<path d="M13 474h3M19 474h3M25 474h3M31 474h3M37 474h3M43 474h3M49 474h3M55 474h3M61 474h3M67 474h3M73 474h3M79 474h3M85 474h3M91 474h3M97 474h3M103 474h3M109 474h3M115 474h3M121 474h3M127 474h3M133 474h3M139 474h3M145 474h3M151 474h3M157 474h3M163 474h3M169 474h3M175 474h3M181 474h3M187 474h3M193 474h3M199 474h3M205 474h3M211 474h3M217 474h3M223 474h3M229 474h3M235 474h3M241 474h3M247 474h3M253 474h3M259 474h3M265 474h3M271 474h3M277 474h3M283 474h3M289 474h3M295 474h3M301 474h3M307 474h3M313 474h3M319 474h3M325 474h3M331 474h3M337 474h3M343 474h3M349 474h3M355 474h3M361 474h3M367 474h3M373 474h3M379 474h3M385 474h3M391 474h3M397 474h3M403 474h3M409 474h3M415 474h3M421 474h3M427 474h3M433 474h3M439 474h3M445 474h3M451 474h3M457 474h3M463 474h3M469 474h3M475 474h3M481 474h3M487 474h3M493 474h3M499 474h3M505 474h3M511 474h3M517 474h3M523 474h3M529 474h3M535 474h3M541 474h3M547 474h3M553 474h3M559 474h3M565 474h3M571 474h3M577 474h3M583 474h3M589 474h3M595 474h3M601 474h3M607 474h3M613 474h3M619 474h3M625 474h3M631 474h3M637 474h3M643 474h3M649 474h3M655 474h3M661 474h3M667 474h3M673 474h3" stroke="#c0c0c0" stroke-width="1" transform="translate(0,0.5)"/>
<path d="M13 513h3M19 513h3M25 513h3M31 513h3M37 513h3M43 513h3M49 513h3M55 513h3M61 513h3M67 513h3M73 513h3M79 513h3M85 513h3M91 513h3M97 513h3M103 513h3M109 513h3M115 513h3M121 513h3M127 513h3M133 513h3M139 513h3M145 513h3M151 513h3M157 513h3M163 513h3M169 513h3M175 513h3M181 513h3M187 513h3M193 513h3M199 513h3M205 513h3M211 513h3M217 513h3M223 513h3M229 513h3M235 513h3M241 513h3M247 513h3M253 513h3M259 513h3M265 513h3M271 513h3M277 513h3M283 513h3M289 513h3M295 513h3M301 513h3M307 513h3M313 513h3M319 513h3M325 513h3M331 513h3M337 513h3M343 513h3M349 513h3M355 513h3M361 513h3M367 513h3M373 513h3M379 513h3M385 513h3M391 513h3M397 513h3M403 513h3M409 513h3M415 513h3M421 513h3M427 513h3M433 513h3M439 513h3M445 513h3M451 513h3M457 513h3M463 513h3M469 513h3M475 513h3M481 513h3M487 513h3M493 513h3M499 513h3M505 513h3M511 513h3M517 513h3M523 513h3M529 513h3M535 513h3M541 513h3M547 513h3M553 513h3M559 513h3M565 513h3M571 513h3M577 513h3M583 513h3M589 513h3M595 513h3M601 513h3M607 513h3M613 513h3M619 513h3M625 513h3M631 513h3M637 513h3M643 513h3M649 513h3M655 513h3M661 513h3M667 513h3M673 513h3" stroke="#c0c0c0" stroke-width="1" transform="translate(0,0.5)"/>
<path d="M13 536h3M19 536h3M25 536h3M31 536h3M37 536h3M43 536h3M49 536h3M55 536h3M61 536h3M67 536h3M73 536h3M79 536h3M85 536h3M91 536h3M97 536h3M103 536h3M109 536h3M115 536h3M121 536h3M127 536h3M133 536h3M139 536h3M145 536h3M151 536h3M157 536h3M163 536h3M169 536h3M175 536h3M181 536h3M187 536h3M193 536h3M199 536h3M205 536h3M211 536h3M217 536h3M223 536h3M229 536h3M235 536h3M241 536h3M247 536h3M253 536h3M259 536h3M265 536h3M271 536h3M277 536h3M283 536h3M289 536h3M295 536h3M301 536h3M307 536h3M313 536h3M319 536h3M325 536h3M331 536h3M337 536h3M343 536h3M349 536h3M355 536h3M361 536h3M367 536h3M373 536h3M379 536h3M385 536h3M391 536h3M397 536h3M403 536h3M409 536h3M415 536h3M421 536h3M427 536h3M433 536h3M439 536h3M445 536h3M451 536h3M457 536h3M463 536h3M469 536h3M475 536h3M481 536h3M487 536h3M493 536h3M499 536h3M505 536h3M511 536h3M517 536h3M523 536h3M529 536h3M535 536h3M541 536h3M547 536h3M553 536h3M559 536h3M565 536h3M571 536h3M577 536h3M583 536h3M589 536h3M595 536h3M601 536h3M607 536h3M613 536h3M619 536h3M625 536h3M631 536h3M637 536h3M643 536h3M649 536h3M655 536h3M661 536h3M667 536h3M673 536h3" stroke="#c0c0c0" stroke-width="1" transform="translate(0,0.5)"/>
</g>
<g shape-rendering="crispEdges" fill="#fff">
<rect x="11" y="34" width="669" height="1"/>
<rect x="11" y="377" width="669" height="1"/>
<rect x="11" y="34" width="1" height="344"/>
<rect x="679" y="34" width="1" height="344"/>
<rect x="11" y="379" width="669" height="1"/>
<rect x="11" y="552" width="669" height="1"/>
<rect x="11" y="379" width="1" height="174"/>
<rect x="679" y="379" width="1" height="174"/>
<rect x="680" y="38" width="2" height="1"/>
<rect x="680" y="71" width="2" height="1"/>
<rect x="680" y="105" width="2" height="1"/>
<rect x="680" y="139" width="2" height="1"/>
<rect x="680" y="173" width="2" height="1"/>
<rect x="680" y="207" width="2" height="1"/>
<rect x="680" y="240" width="2" height="1"/>
<rect x="680" y="274" width="2" height="1"/>
<rect x="680" y="308" width="2" height="1"/>
<rect x="680" y="341" width="2" height="1"/>
<rect x="680" y="374" width="2" height="1"/>
<rect x="680" y="474" width="1" height="1"/>
<rect x="12" y="553" width="1" height="3"/>
<rect x="76" y="553" width="1" height="3"/>
<rect x="140" y="553" width="1" height="3"/>
<rect x="204" y="553" width="1" height="3"/>
<rect x="268" y="553" width="1" height="3"/>
<rect x="332" y="553" width="1" height="3"/>
<rect x="396" y="553" width="1" height="3"/>
<rect x="460" y="553" width="1" height="3"/>
<rect x="524" y="553" width="1" height="3"/>
</g>
<rect x="12" y="334" width="667" height="1" fill="#778899" shape-rendering="crispEdges"/>
<g fill="#00ff00" shape-rendering="crispEdges"><rect x="12" y="128" width="1" height="21"/><rect x="11" y="131" width="3" height="18"/><rect x="16" y="148" width="1" height="15"/><rect x="15" y="148" width="3" height="14"/><rect x="20" y="158" width="1" height="10"/><rect x="19" y="161" width="3" height="4"/><rect x="24" y="154" width="1" height="19"/><rect x="23" y="155" width="3" height="11"/><rect x="28" y="146" width="1" height="14"/><rect x="27" y="152" width="3" height="4"/><rect x="32" y="133" width="1" height="21"/><rect x="31" y="139" width="3" height="14"/><rect x="36" y="134" width="1" height="14"/><rect x="35" y="139" width="3" height="9"/><rect x="40" y="138" width="1" height="20"/><rect x="39" y="147" width="3" height="11"/><rect x="44" y="157" width="1" height="38"/><rect x="43" y="158" width="3" height="36"/><rect x="48" y="180" width="1" height="16"/><rect x="47" y="181" width="3" height="13"/><rect x="52" y="179" width="1" height="7"/><rect x="51" y="182" width="3" height="3"/><rect x="56" y="182" width="1" height="15"/><rect x="55" y="183" width="3" height="14"/><rect x="60" y="190" width="1" height="12"/><rect x="59" y="196" width="3" height="1"/><rect x="64" y="189" width="1" height="9"/><rect x="63" y="193" width="3" height="3"/><rect x="68" y="193" width="1" height="12"/><rect x="67" y="194" width="3" height="5"/><rect x="72" y="196" width="1" height="9"/><rect x="71" y="197" width="3" height="4"/><rect x="76" y="196" width="1" height="10"/><rect x="75" y="197" width="3" height="6"/><rect x="80" y="202" width="1" height="4"/><rect x="79" y="204" width="3" height="1"/><rect x="84" y="202" width="1" height="5"/><rect x="83" y="204" width="3" height="2"/><rect x="88" y="203" width="1" height="32"/><rect x="87" y="205" width="3" height="14"/><rect x="92" y="216" width="1" height="7"/><rect x="91" y="217" width="3" height="2"/><rect x="96" y="209" width="1" height="13"/><rect x="95" y="211" width="3" height="7"/><rect x="100" y="192" width="1" height="27"/><rect x="99" y="212" width="3" height="2"/><rect x="104" y="193" width="1" height="29"/><rect x="103" y="193" width="3" height="21"/><rect x="108" y="181" width="1" height="20"/><rect x="107" y="188" width="3" height="6"/><rect x="112" y="188" width="1" height="19"/><rect x="111" y="190" width="3" height="9"/><rect x="116" y="186" width="1" height="20"/><rect x="115" y="191" width="3" height="9"/><rect x="120" y="175" width="1" height="19"/><rect x="119" y="184" width="3" height="8"/><rect x="124" y="141" width="1" height="43"/><rect x="123" y="148" width="3" height="36"/><rect x="128" y="115" width="1" height="37"/><rect x="127" y="128" width="3" height="21"/><rect x="132" y="118" width="1" height="20"/><rect x="131" y="124" width="3" height="4"/><rect x="136" y="120" width="1" height="16"/><rect x="135" y="124" width="3" height="3"/><rect x="140" y="111" width="1" height="21"/><rect x="139" y="124" width="3" height="4"/><rect x="144" y="120" width="1" height="24"/><rect x="143" y="124" width="3" height="12"/><rect x="148" y="116" width="1" height="30"/><rect x="147" y="119" width="3" height="18"/><rect x="152" y="119" width="1" height="20"/><rect x="151" y="119" width="3" height="14"/><rect x="156" y="128" width="1" height="14"/><rect x="155" y="133" width="3" height="1"/><rect x="160" y="126" width="1" height="13"/><rect x="159" y="131" width="3" height="3"/><rect x="164" y="125" width="1" height="13"/><rect x="163" y="130" width="3" height="3"/><rect x="168" y="119" width="1" height="17"/><rect x="167" y="127" width="3" height="2"/><rect x="172" y="113" width="1" height="15"/><rect x="171" y="113" width="3" height="15"/><rect x="176" y="98" width="1" height="19"/><rect x="175" y="108" width="3" height="5"/><rect x="180" y="94" width="1" height="22"/><rect x="179" y="107" width="3" height="4"/><rect x="184" y="94" width="1" height="23"/><rect x="183" y="94" width="3" height="18"/><rect x="188" y="86" width="1" height="15"/><rect x="187" y="88" width="3" height="8"/><rect x="192" y="73" width="1" height="16"/><rect x="191" y="76" width="3" height="13"/><rect x="196" y="67" width="1" height="16"/><rect x="195" y="72" width="3" height="4"/><rect x="200" y="58" width="1" height="18"/><rect x="199" y="62" width="3" height="10"/><rect x="204" y="52" width="1" height="20"/><rect x="203" y="62" width="3" height="6"/><rect x="208" y="60" width="1" height="18"/><rect x="207" y="68" width="3" height="6"/><rect x="212" y="73" width="1" height="115"/><rect x="211" y="82" width="3" height="79"/><rect x="216" y="158" width="1" height="98"/><rect x="215" y="161" width="3" height="71"/><rect x="220" y="220" width="1" height="54"/><rect x="219" y="232" width="3" height="26"/><rect x="224" y="239" width="1" height="26"/><rect x="223" y="258" width="3" height="3"/><rect x="228" y="251" width="1" height="44"/><rect x="227" y="261" width="3" height="30"/><rect x="232" y="265" width="1" height="30"/><rect x="231" y="268" width="3" height="22"/><rect x="236" y="226" width="1" height="43"/><rect x="235" y="226" width="3" height="43"/><rect x="240" y="194" width="1" height="32"/><rect x="239" y="202" width="3" height="24"/><rect x="244" y="196" width="1" height="33"/><rect x="243" y="202" width="3" height="24"/><rect x="248" y="202" width="1" height="38"/><rect x="247" y="208" width="3" height="19"/><rect x="252" y="186" width="1" height="35"/><rect x="251" y="208" width="3" height="11"/><rect x="256" y="208" width="1" height="18"/><rect x="255" y="215" width="3" height="4"/><rect x="260" y="214" width="1" height="26"/><rect x="259" y="215" width="3" height="15"/><rect x="264" y="218" width="1" height="16"/><rect x="263" y="231" width="3" height="3"/><rect x="268" y="225" width="1" height="15"/><rect x="267" y="235" width="3" height="2"/><rect x="272" y="235" width="1" height="12"/><rect x="271" y="237" width="3" height="2"/><rect x="276" y="237" width="1" height="11"/><rect x="275" y="238" width="3" height="10"/><rect x="280" y="247" width="1" height="23"/><rect x="279" y="247" width="3" height="17"/><rect x="284" y="256" width="1" height="14"/><rect x="283" y="261" width="3" height="3"/><rect x="288" y="252" width="1" height="19"/><rect x="287" y="254" width="3" height="8"/><rect x="292" y="250" width="1" height="10"/><rect x="291" y="254" width="3" height="3"/><rect x="296" y="255" width="1" height="8"/><rect x="295" y="258" width="3" height="1"/><rect x="300" y="257" width="1" height="12"/><rect x="299" y="258" width="3" height="6"/><rect x="304" y="258" width="1" height="10"/><rect x="303" y="259" width="3" height="5"/><rect x="308" y="258" width="1" height="9"/><rect x="307" y="259" width="3" height="4"/><rect x="312" y="262" width="1" height="16"/><rect x="311" y="262" width="3" height="13"/><rect x="316" y="266" width="1" height="10"/><rect x="315" y="268" width="3" height="7"/><rect x="320" y="262" width="1" height="14"/><rect x="319" y="264" width="3" height="5"/><rect x="324" y="259" width="1" height="10"/><rect x="323" y="264" width="3" height="5"/><rect x="328" y="264" width="1" height="10"/><rect x="327" y="267" width="3" height="2"/><rect x="332" y="267" width="1" height="7"/><rect x="331" y="268" width="3" height="1"/><rect x="336" y="268" width="1" height="13"/><rect x="335" y="268" width="3" height="13"/><rect x="340" y="273" width="1" height="11"/><rect x="339" y="280" width="3" height="1"/><rect x="344" y="278" width="1" height="4"/><rect x="343" y="278" width="3" height="3"/><rect x="348" y="273" width="1" height="8"/><rect x="347" y="276" width="3" height="2"/><rect x="352" y="276" width="1" height="4"/><rect x="351" y="277" width="3" height="1"/><rect x="356" y="277" width="1" height="7"/><rect x="355" y="278" width="3" height="5"/><rect x="360" y="279" width="1" height="10"/><rect x="359" y="282" width="3" height="2"/><rect x="364" y="275" width="1" height="13"/><rect x="363" y="276" width="3" height="8"/><rect x="368" y="276" width="1" height="6"/><rect x="367" y="276" width="3" height="5"/><rect x="372" y="276" width="1" height="6"/><rect x="371" y="280" width="3" height="2"/><rect x="376" y="273" width="1" height="9"/><rect x="375" y="278" width="3" height="1"/><rect x="380" y="275" width="1" height="6"/><rect x="379" y="276" width="3" height="3"/><rect x="384" y="272" width="1" height="11"/><rect x="383" y="272" width="3" height="6"/><rect x="388" y="271" width="1" height="9"/><rect x="387" y="272" width="3" height="1"/><rect x="392" y="269" width="1" height="15"/><rect x="391" y="272" width="3" height="12"/><rect x="396" y="274" width="1" height="11"/><rect x="395" y="280" width="3" height="5"/><rect x="400" y="266" width="1" height="19"/><rect x="399" y="269" width="3" height="12"/><rect x="404" y="253" width="1" height="25"/><rect x="403" y="260" width="3" height="8"/><rect x="408" y="249" width="1" height="11"/><rect x="407" y="258" width="3" height="2"/><rect x="412" y="254" width="1" height="16"/><rect x="411" y="258" width="3" height="7"/><rect x="416" y="264" width="1" height="22"/><rect x="415" y="264" width="3" height="18"/><rect x="420" y="278" width="1" height="16"/><rect x="419" y="282" width="3" height="9"/><rect x="424" y="270" width="1" height="21"/><rect x="423" y="275" width="3" height="16"/><rect x="428" y="271" width="1" height="9"/><rect x="427" y="271" width="3" height="5"/><rect x="432" y="261" width="1" height="12"/><rect x="431" y="263" width="3" height="10"/><rect x="436" y="262" width="1" height="14"/><rect x="435" y="262" width="3" height="14"/><rect x="440" y="268" width="1" height="11"/><rect x="439" y="274" width="3" height="2"/><rect x="444" y="268" width="1" height="10"/><rect x="443" y="272" width="3" height="2"/><rect x="448" y="257" width="1" height="16"/><rect x="447" y="258" width="3" height="15"/><rect x="452" y="250" width="1" height="12"/><rect x="451" y="258" width="3" height="3"/><rect x="456" y="255" width="1" height="7"/><rect x="455" y="257" width="3" height="5"/><rect x="460" y="254" width="1" height="9"/><rect x="459" y="257" width="3" height="1"/><rect x="464" y="256" width="1" height="15"/><rect x="463" y="257" width="3" height="9"/><rect x="468" y="263" width="1" height="8"/><rect x="467" y="266" width="3" height="1"/><rect x="472" y="261" width="1" height="13"/><rect x="471" y="266" width="3" height="2"/><rect x="476" y="257" width="1" height="13"/><rect x="475" y="258" width="3" height="12"/><rect x="480" y="249" width="1" height="12"/><rect x="479" y="254" width="3" height="6"/><rect x="484" y="249" width="1" height="22"/><rect x="483" y="253" width="3" height="13"/><rect x="488" y="266" width="1" height="29"/><rect x="487" y="267" width="3" height="16"/><rect x="492" y="280" width="1" height="25"/><rect x="491" y="283" width="3" height="16"/><rect x="496" y="276" width="1" height="24"/><rect x="495" y="284" width="3" height="16"/><rect x="500" y="279" width="1" height="22"/><rect x="499" y="283" width="3" height="2"/><rect x="504" y="277" width="1" height="32"/><rect x="503" y="285" width="3" height="1"/><rect x="508" y="268" width="1" height="27"/><rect x="507" y="272" width="3" height="14"/><rect x="512" y="267" width="1" height="30"/><rect x="511" y="272" width="3" height="25"/><rect x="516" y="290" width="1" height="25"/><rect x="515" y="297" width="3" height="8"/><rect x="520" y="305" width="1" height="20"/><rect x="519" y="306" width="3" height="15"/><rect x="524" y="310" width="1" height="40"/><rect x="523" y="320" width="3" height="24"/><rect x="528" y="342" width="1" height="27"/><rect x="527" y="343" width="3" height="10"/><rect x="532" y="349" width="1" height="13"/><rect x="531" y="352" width="3" height="7"/><rect x="536" y="340" width="1" height="28"/><rect x="535" y="350" width="3" height="9"/><rect x="540" y="341" width="1" height="18"/><rect x="539" y="343" width="3" height="9"/><rect x="544" y="333" width="1" height="16"/><rect x="543" y="334" width="3" height="10"/></g>
<g shape-rendering="crispEdges"><rect x="12" y="132" width="1" height="16" fill="#ffffff"/><rect x="16" y="149" width="1" height="12" fill="#ffffff"/><rect x="20" y="162" width="1" height="2" fill="#ffffff"/><rect x="24" y="156" width="1" height="9" fill="#000000"/><rect x="28" y="153" width="1" height="2" fill="#000000"/><rect x="32" y="140" width="1" height="12" fill="#000000"/><rect x="36" y="140" width="1" height="7" fill="#ffffff"/><rect x="40" y="148" width="1" height="9" fill="#ffffff"/><rect x="44" y="159" width="1" height="34" fill="#ffffff"/><rect x="48" y="182" width="1" height="11" fill="#000000"/><rect x="52" y="183" width="1" height="1" fill="#ffffff"/><rect x="56" y="184" width="1" height="12" fill="#ffffff"/><rect x="64" y="194" width="1" height="1" fill="#000000"/><rect x="68" y="195" width="1" height="3" fill="#ffffff"/><rect x="72" y="198" width="1" height="2" fill="#000000"/><rect x="76" y="198" width="1" height="4" fill="#ffffff"/><rect x="88" y="206" width="1" height="12" fill="#ffffff"/><rect x="96" y="212" width="1" height="5" fill="#000000"/><rect x="104" y="194" width="1" height="19" fill="#000000"/><rect x="108" y="189" width="1" height="4" fill="#000000"/><rect x="112" y="191" width="1" height="7" fill="#ffffff"/><rect x="116" y="192" width="1" height="7" fill="#000000"/><rect x="120" y="185" width="1" height="6" fill="#000000"/><rect x="124" y="149" width="1" height="34" fill="#000000"/><rect x="128" y="129" width="1" height="19" fill="#000000"/><rect x="132" y="125" width="1" height="2" fill="#000000"/><rect x="136" y="125" width="1" height="1" fill="#ffffff"/><rect x="140" y="125" width="1" height="2" fill="#000000"/><rect x="144" y="125" width="1" height="10" fill="#ffffff"/><rect x="148" y="120" width="1" height="16" fill="#000000"/><rect x="152" y="120" width="1" height="12" fill="#ffffff"/><rect x="160" y="132" width="1" height="1" fill="#000000"/><rect x="164" y="131" width="1" height="1" fill="#000000"/><rect x="172" y="114" width="1" height="13" fill="#000000"/><rect x="176" y="109" width="1" height="3" fill="#000000"/><rect x="180" y="108" width="1" height="2" fill="#ffffff"/><rect x="184" y="95" width="1" height="16" fill="#000000"/><rect x="188" y="89" width="1" height="6" fill="#000000"/><rect x="192" y="77" width="1" height="11" fill="#000000"/><rect x="196" y="73" width="1" height="2" fill="#000000"/><rect x="200" y="63" width="1" height="8" fill="#000000"/><rect x="204" y="63" width="1" height="4" fill="#ffffff"/><rect x="208" y="69" width="1" height="4" fill="#ffffff"/><rect x="212" y="83" width="1" height="77" fill="#ffffff"/><rect x="216" y="162" width="1" height="69" fill="#ffffff"/><rect x="220" y="233" width="1" height="24" fill="#ffffff"/><rect x="224" y="259" width="1" height="1" fill="#ffffff"/><rect x="228" y="262" width="1" height="28" fill="#ffffff"/><rect x="232" y="269" width="1" height="20" fill="#000000"/><rect x="236" y="227" width="1" height="41" fill="#000000"/><rect x="240" y="203" width="1" height="22" fill="#000000"/><rect x="244" y="203" width="1" height="22" fill="#ffffff"/><rect x="248" y="209" width="1" height="17" fill="#000000"/><rect x="252" y="209" width="1" height="9" fill="#ffffff"/><rect x="256" y="216" width="1" height="2" fill="#000000"/><rect x="260" y="216" width="1" height="13" fill="#ffffff"/><rect x="264" y="232" width="1" height="1" fill="#ffffff"/><rect x="276" y="239" width="1" height="8" fill="#ffffff"/><rect x="280" y="248" width="1" height="15" fill="#ffffff"/><rect x="284" y="262" width="1" height="1" fill="#000000"/><rect x="288" y="255" width="1" height="6" fill="#000000"/><rect x="292" y="255" width="1" height="1" fill="#ffffff"/><rect x="300" y="259" width="1" height="4" fill="#ffffff"/><rect x="304" y="260" width="1" height="3" fill="#000000"/><rect x="308" y="260" width="1" height="2" fill="#ffffff"/><rect x="312" y="263" width="1" height="11" fill="#ffffff"/><rect x="316" y="269" width="1" height="5" fill="#000000"/><rect x="320" y="265" width="1" height="3" fill="#000000"/><rect x="324" y="265" width="1" height="3" fill="#ffffff"/><rect x="336" y="269" width="1" height="11" fill="#ffffff"/><rect x="344" y="279" width="1" height="1" fill="#000000"/><rect x="356" y="279" width="1" height="3" fill="#ffffff"/><rect x="364" y="277" width="1" height="6" fill="#000000"/><rect x="368" y="277" width="1" height="3" fill="#ffffff"/><rect x="380" y="277" width="1" height="1" fill="#000000"/><rect x="384" y="273" width="1" height="4" fill="#000000"/><rect x="392" y="273" width="1" height="10" fill="#ffffff"/><rect x="396" y="281" width="1" height="3" fill="#000000"/><rect x="400" y="270" width="1" height="10" fill="#000000"/><rect x="404" y="261" width="1" height="6" fill="#000000"/><rect x="412" y="259" width="1" height="5" fill="#ffffff"/><rect x="416" y="265" width="1" height="16" fill="#ffffff"/><rect x="420" y="283" width="1" height="7" fill="#ffffff"/><rect x="424" y="276" width="1" height="14" fill="#000000"/><rect x="428" y="272" width="1" height="3" fill="#000000"/><rect x="432" y="264" width="1" height="8" fill="#000000"/><rect x="436" y="263" width="1" height="12" fill="#ffffff"/><rect x="448" y="259" width="1" height="13" fill="#000000"/><rect x="452" y="259" width="1" height="1" fill="#ffffff"/><rect x="456" y="258" width="1" height="3" fill="#000000"/><rect x="464" y="258" width="1" height="7" fill="#ffffff"/><rect x="476" y="259" width="1" height="10" fill="#000000"/><rect x="480" y="255" width="1" height="4" fill="#000000"/><rect x="484" y="254" width="1" height="11" fill="#ffffff"/><rect x="488" y="268" width="1" height="14" fill="#ffffff"/><rect x="492" y="284" width="1" height="14" fill="#ffffff"/><rect x="496" y="285" width="1" height="14" fill="#000000"/><rect x="508" y="273" width="1" height="12" fill="#000000"/><rect x="512" y="273" width="1" height="23" fill="#ffffff"/><rect x="516" y="298" width="1" height="6" fill="#ffffff"/><rect x="520" y="307" width="1" height="13" fill="#ffffff"/><rect x="524" y="321" width="1" height="22" fill="#ffffff"/><rect x="528" y="344" width="1" height="8" fill="#ffffff"/><rect x="532" y="353" width="1" height="5" fill="#ffffff"/><rect x="536" y="351" width="1" height="7" fill="#000000"/><rect x="540" y="344" width="1" height="7" fill="#000000"/><rect x="544" y="335" width="1" height="8" fill="#000000"/></g>
<rect x="11" y="35" width="1" height="342" fill="#fff" shape-rendering="crispEdges"/>
<svg x="12" y="380" width="667" height="172" viewBox="12 380 667 172" overflow="hidden">
<polyline points="12,462 20,499 24,518 27.5,534 32,515.5 36,499 41,480 44,480 48,496 52,517 56,532.6 60,543 72,543 75,541 78,546 94,546.5 96,544.4 100,537.3 102,515.2 104,494.7 106.3,474.2 108,460 109.6,449.3 111.8,435.3 114.7,423.5 117.7,412.4 120,404.3 120.6,403.6 138.6,403.6 140,402.4 144,410.2 148,411 150,421.3 152,434.6 153.8,447.8 156,466 157.6,474.2 159,491.5 160,505 164.7,505 166.3,497.9 168.7,488.4 170.3,475.8 171,466 172.5,446.4 174,431.6 174.7,422.8 175.5,416.1 177.4,415.1 180,417.2 181.8,413.2 182,405 183.6,397.4 184,397 200,397 202.8,398.4 206.5,402 208,409.5 209.4,419.8 211,439 212.4,456.7 213,466 215.2,479 217.6,496.3 220,510.5 222.3,526.2 224,535.7 226.8,545.6 230.2,550 232.4,550 234.7,537.6 238,510.5 242.6,469.8 245.8,449.3 246.8,438.3 247.7,427.2 251,421.3 253.6,418.6 256.1,418.6 257.6,425.7 259,436.8 261.3,447.8 262.8,462.6 264,476.6 266.4,506 268.6,528.6 272,541 276.6,543.3 280,550 284,549.1 288,545.2 292,538.9 296,531.8 300,527.8 302,521.5 304,512 306,505.7 308,500.2 311.5,499.4 313,504.2 314.7,520 317.9,531 320.2,542 324,534.1 328,526.2 330.5,513.6 332,512 334.4,514.4 340,515.2 344,512.4 348,523.1 356,523.9 360,527 362,508.9 364,491.5 368,484.4 372,483.7 376,488.4 378,477.4 380,464.7 382,447.8 384,431.6 386.5,417.6 388,411.7 389.4,418.3 390.9,436.8 392.8,450.8 394.6,462.6 396,486 398.3,464 399.7,453.7 402,446.4 404,440.5 407.4,428 412,420.6 413.3,422.8 414.7,439 416.2,450.8 418.4,464.8 419.7,477.4 423.7,482.1 426,491.5 428,497.9 432,501 436,506.5 437.9,499.4 440.2,485.2 442.6,467.9 443.5,465.5 445.7,444.9 448,421.3 454.6,420.6 458.3,420.1 460.2,418.6 462,422.8 463,428.7 464,430.1 468.1,430.9 470.3,442 471.8,453.7 474,461.9 475.8,468.7 480,469.5 482,477.4 484,491.5 486,502.6 488,512.8 492,518.4 496,523.9 500,530 504,532.6 508,522.8 512,516.8 516,516.3 520,516.8 524,523.1 526,534.1 528,542 532,547.5 536,545.2 540,540.4 541.8,531 544,520" fill="none" stroke="#ff0000" stroke-width="2" stroke-linejoin="round" stroke-linecap="butt" shape-rendering="crispEdges"/>
<polyline points="12,514.9 16,514.4 20,514 24,513.3 28,512.8 32,512 36,510.2 60,510.2 64,510.5 68,512 72,514.4 76,520 80,523 84,525.5 88,531 92,535 96,537.3 100,538.9 104,541.2 108,543.6 112,543.6 116,542.8 120,542.8 124,542 128,534 132,526.2 136,519.1 140,512.8 144,505.7 148,498.6 152,493.9 156,490 160,484 164,478.1 170.3,471.8 174,465.5 180,456.7 188,445.6 196,436.8 204,430.9 208.7,426.9 212.4,426.9 216,430.9 220,435.8 228,447.1 236,457.4 240,460.5 248,468.6 256,476.6 264,485.6 272,493.5 280,501 284,504.2 288,508.9 292,512.8 296,516.8 300,520 304,522.3 308,525.5 312,527.8 316,530.2 320,531.8 324,533.3 328,534.1 332,534.9 336,535.7 340,536.8 348,538.9 356,539.7 380,539.7 388,538 396,537.3 400,536 404,533 408,529.4 412,525.9 416,525.5 420,525.5 424,524.4 428,523.9 432,522.3 436,528.6 440,529.1 444,527 448,522.3 452,517.6 456,512 460,505.5 464,499.4 468,494.7 472,490.8 476,482.1 480,475.8 484,471 488,473.4 492,475 500,475 504,475.8 508,474 512,474 516,475.8 520,480.5 524,483.5 528,486 532,488.4 536,490.8 540,493.9 544,497.9" fill="none" stroke="#ffff00" stroke-width="2" stroke-linejoin="round" stroke-linecap="butt" shape-rendering="crispEdges"/>
<polyline points="12,512 16,516 20,524.7 28,524.7 32,520.7 36,519.6 40,520 44,520.7 48,521.5 52,523 56,522.7 60,528 64,533.3 68,537.3 72,540.4 76,543.6 80,546 84,546.4 100,547 104,542.5 108,537.5 112,534.5 116,528.5 120,522 122,513.6 124,505.7 128,491.5 132,479 136,463 138.6,455.2 142.8,442 148,432.4 152,425.7 156,419 160,414.5 164,412.5 168,411 172,409.2 176,407.3 180,405.8 184,404.8 188,403.6 208,404 210,411 212,417.6 216,433.1 220,448 224,463 228,476.6 232,485.6 236,494.7 240,501.4 244,507.1 248,511.6 252,515 256,518.4 260,520.7 264,523 268,524 284,524 288,520.7 292,517.1 296,514.9 300,512.8 304,508.9 308,507 312,505.7 316,504.2 320,503.8 324,508.9 328,516 330,522.3 332,530.2 334.4,540.4 336,546.7 340,547.5 344,547.5 348,546.7 356,546.7 364,546 372,544.4 376,542.8 380,539.7 384,535.7 388,530.2 392,529.4 396,527.8 400,520.3 402.3,512 404,504.2 408,487.6 412,475 416,478.9 420,483.7 424,477.4 428,466.3 431,453.7 436,442 439,441.2 444,439 448,435.3 452,431.6 456,428.7 460,426.9 464,427.9 468,429.4 472,430.9 476,430.9 480,429.4 482,430.9 485,436.8 488,445.6 491,453.7 494,465.5 497.9,477.4 501.8,488.4 504,492.7 508,491.2 512,491.9 516,497.5 520,505.7 524,518.4 528,526.2 532,531 536,534.1 540,538 544,541.2" fill="none" stroke="#00ffff" stroke-width="2" stroke-linejoin="round" stroke-linecap="butt" shape-rendering="crispEdges"/>
</svg>
<polygon points="159.70,139.80 161.58,144.71 166.83,144.98 162.74,148.29 164.11,153.37 159.70,150.50 155.29,153.37 156.66,148.29 152.57,144.98 157.82,144.71" fill="#ff69b4"/>
<polygon points="164,149.4 173.7,159 173.7,165.8 166.8,159.7 166.8,173.7 161.3,173.7 161.3,159.7 154.5,165.8 154.5,158.6" fill="#ff69b4"/>
<polygon points="250,156 255.2,156 255.2,168.5 262.3,163 262.3,169.7 252.7,179.3 243.1,169.7 243.1,163 250,168.5" fill="#ffff00"/>
<polygon points="247.60,187.20 249.48,192.01 254.64,192.31 250.64,195.59 251.95,200.59 247.60,197.80 243.25,200.59 244.56,195.59 240.56,192.31 245.72,192.01" fill="#ffff00"/>
<polygon points="545.5,35 555.5,35 550.5,40.5" fill="#8899aa"/>
</svg>
<!-- chart title -->
<svg class="abs" style="left:15px;top:41px" width="8" height="5" viewBox="0 0 8 5"><polygon points="0,0 8,0 4,4.5" fill="#fff"/></svg>
<div class="ax" style="left:26px;top:37px;letter-spacing:-0.3px">EURUSD,M15</div><div class="ax" style="left:93px;top:37px;letter-spacing:-0.28px">1.08433</div><div class="ax" style="left:128.5px;top:37px;letter-spacing:-0.28px">1.08468</div><div class="ax" style="left:164.5px;top:37px;letter-spacing:-0.28px">1.08417</div><div class="ax" style="left:200.5px;top:37px;letter-spacing:-0.28px">1.08463</div>
<div class="ax" style="left:15.5px;top:383px;letter-spacing:-0.29px">R(9,26,52) -60.0 -87.1 -31.0</div>
<div class="ax" style="left:684px;top:32.5px;letter-spacing:-0.25px">1.09460</div><div class="ax" style="left:684px;top:65.5px;letter-spacing:-0.25px">1.09350</div><div class="ax" style="left:684px;top:99.5px;letter-spacing:-0.25px">1.09235</div><div class="ax" style="left:684px;top:133.5px;letter-spacing:-0.25px">1.09120</div><div class="ax" style="left:684px;top:167.5px;letter-spacing:-0.25px">1.09005</div><div class="ax" style="left:684px;top:201.5px;letter-spacing:-0.25px">1.08890</div><div class="ax" style="left:684px;top:234.5px;letter-spacing:-0.25px">1.08780</div><div class="ax" style="left:684px;top:268.5px;letter-spacing:-0.25px">1.08665</div><div class="ax" style="left:684px;top:302.5px;letter-spacing:-0.25px">1.08550</div><div class="ax" style="left:684px;top:335.5px;letter-spacing:-0.25px">1.08440</div><div class="ax" style="left:684px;top:368.5px;letter-spacing:-0.25px">1.08330</div><div class="ax" style="left:682px;top:381.5px;letter-spacing:-0.25px">120</div><div class="ax" style="left:682px;top:391.5px;letter-spacing:-0.25px">100</div><div class="ax" style="left:682px;top:406.5px;letter-spacing:-0.25px">80</div><div class="ax" style="left:682px;top:429.5px;letter-spacing:-0.25px">50</div><div class="ax" style="left:683px;top:469.0px;letter-spacing:-0.25px">0.00</div><div class="ax" style="left:682px;top:508.0px;letter-spacing:-0.25px">-50</div><div class="ax" style="left:682px;top:531.0px;letter-spacing:-0.25px">-80</div><div class="ax" style="left:682px;top:540.0px;letter-spacing:-0.25px">-100</div><div class="ax" style="left:12px;top:556px">29 Jun 2023</div><div class="ax" style="left:76px;top:556px">29 Jun 07:00</div><div class="ax" style="left:140px;top:556px">29 Jun 11:00</div><div class="ax" style="left:204px;top:556px">29 Jun 15:00</div><div class="ax" style="left:268px;top:556px">29 Jun 19:00</div><div class="ax" style="left:332px;top:556px">29 Jun 23:00</div><div class="ax" style="left:396px;top:556px">30 Jun 03:15</div><div class="ax" style="left:460px;top:556px">30 Jun 07:15</div><div class="ax" style="left:524px;top:556px">30 Jun 11:15</div>
<div class="abs" style="left:681px;top:329px;width:41px;height:11px;background:#fff"></div>
<div class="ax" style="left:685px;top:327.5px;color:#000;letter-spacing:-0.25px">1.08463</div>
</body></html>
